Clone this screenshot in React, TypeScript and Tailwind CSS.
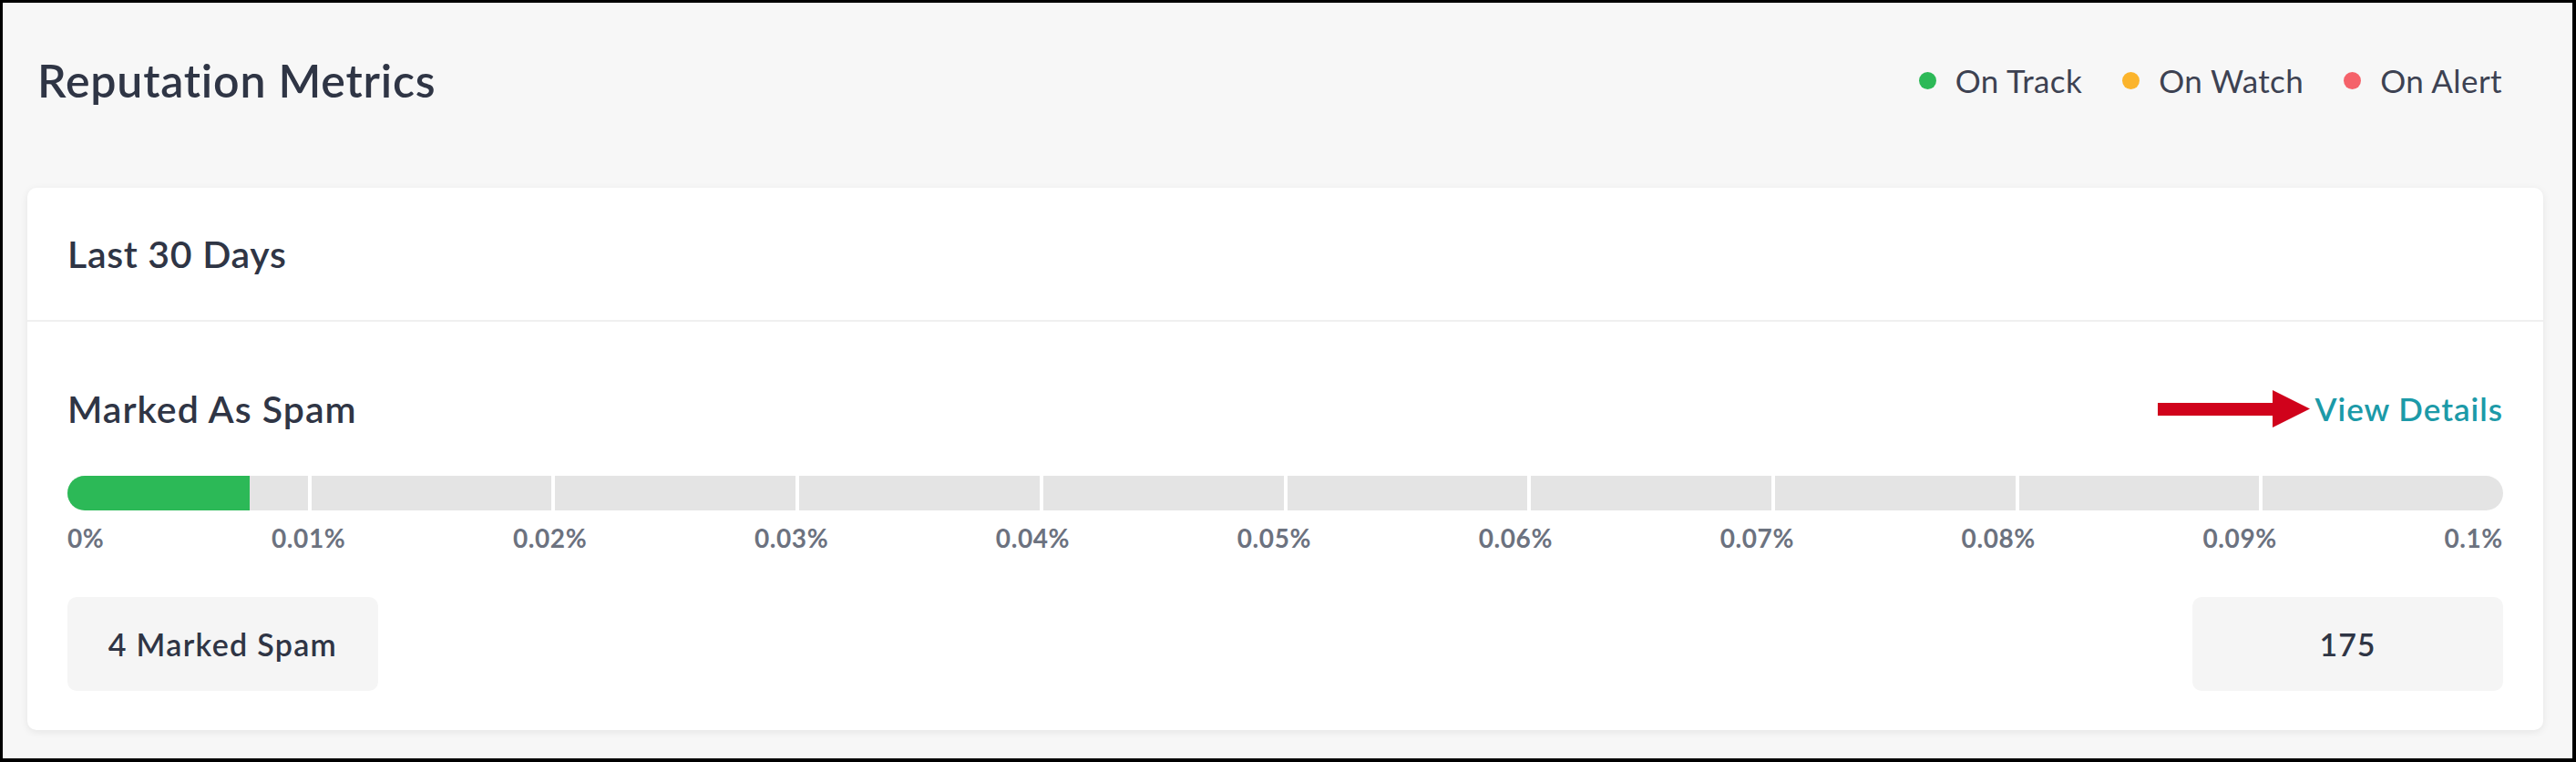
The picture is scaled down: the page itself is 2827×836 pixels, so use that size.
import React from 'react';

const legend = [
  { label: 'On Track', color: 'bg-[#2cb957]' },
  { label: 'On Watch', color: 'bg-[#fbb42c]' },
  { label: 'On Alert', color: 'bg-[#f5626a]' },
];

const ticks = ['0%', '0.01%', '0.02%', '0.03%', '0.04%', '0.05%', '0.06%', '0.07%', '0.08%', '0.09%', '0.1%'];

const SpamBar: React.FC = () => (
  <div className="flex h-[38px] gap-1 overflow-hidden rounded-full">
    {Array.from({ length: 10 }).map((_, i) => (
      <div key={i} className="flex-1 bg-[#e4e4e4]">
        {i === 0 && <div className="h-full w-[76%] bg-[#2cb957]" />}
      </div>
    ))}
  </div>
);

const App: React.FC = () => {
  return (
    <div
      className="flex h-[836px] w-[2827px] flex-col border-t-[3px] border-l-[3px] border-r-4 border-b-4 border-black bg-[#f7f7f7] pl-[27px] pr-[32px] text-[#2f3545]"
      style={{ fontFamily: 'Lato, "Noto Sans", sans-serif' }}
    >
      <div className="flex h-[170px] shrink-0 items-center justify-between pl-[11px] pr-[45px]">
        <h1 className="text-[50px] font-semibold leading-none tracking-[0.8px]">Reputation Metrics</h1>
        <div className="flex items-center gap-[44px]">
          {legend.map((item) => (
            <div key={item.label} className="flex items-center gap-[21px]">
              <span className={`h-[19px] w-[19px] rounded-full ${item.color}`} />
              <span className="text-[35px] leading-none tracking-[0.4px] text-[#3d4252]">{item.label}</span>
            </div>
          ))}
        </div>
      </div>

      <div className="mt-[33px] rounded-[10px] bg-white shadow-[0_2px_8px_rgba(0,0,0,0.08)]">
        <div className="flex h-[147px] items-center border-b-2 border-[#f0f0f0] pl-[44px]">
          <h2 className="text-[41px] font-semibold leading-none tracking-[0.7px]">Last 30 Days</h2>
        </div>

        <div className="px-[44px] pt-[65px] pb-[43px]">
          <div className="flex h-[60px] items-center justify-between">
            <h3 className="text-[41px] font-semibold leading-none tracking-[1px]">Marked As Spam</h3>
            <div className="flex items-center gap-[6px]">
              <svg width="167" height="41" viewBox="0 0 167 41">
                <rect x="0" y="14" width="127" height="14" fill="#d0021b" />
                <polygon points="126,0 167,20.5 126,41" fill="#d0021b" />
              </svg>
              <a href="#" className="text-[35px] font-semibold leading-none tracking-[1px] text-[#1c9aa8]">
                View Details
              </a>
            </div>
          </div>

          <div className="mt-[44px]">
            <SpamBar />
          </div>

          <div className="mt-[15px] flex h-[30px] items-center justify-between text-[28px] font-bold leading-none tracking-[0.6px] text-[#6c727f]">
            {ticks.map((t) => (
              <span key={t}>{t}</span>
            ))}
          </div>

          <div className="mt-[50px] flex justify-between">
            <div className="flex h-[103px] w-[341px] items-center justify-center rounded-[10px] bg-[#f5f5f5] text-[34px] font-semibold tracking-[1.3px]">
              4 Marked Spam
            </div>
            <div className="flex h-[103px] w-[341px] items-center justify-center rounded-[10px] bg-[#f5f5f5] text-[34px] font-semibold tracking-[1px]">
              175
            </div>
          </div>
        </div>
      </div>
    </div>
  );
};

export default App;
